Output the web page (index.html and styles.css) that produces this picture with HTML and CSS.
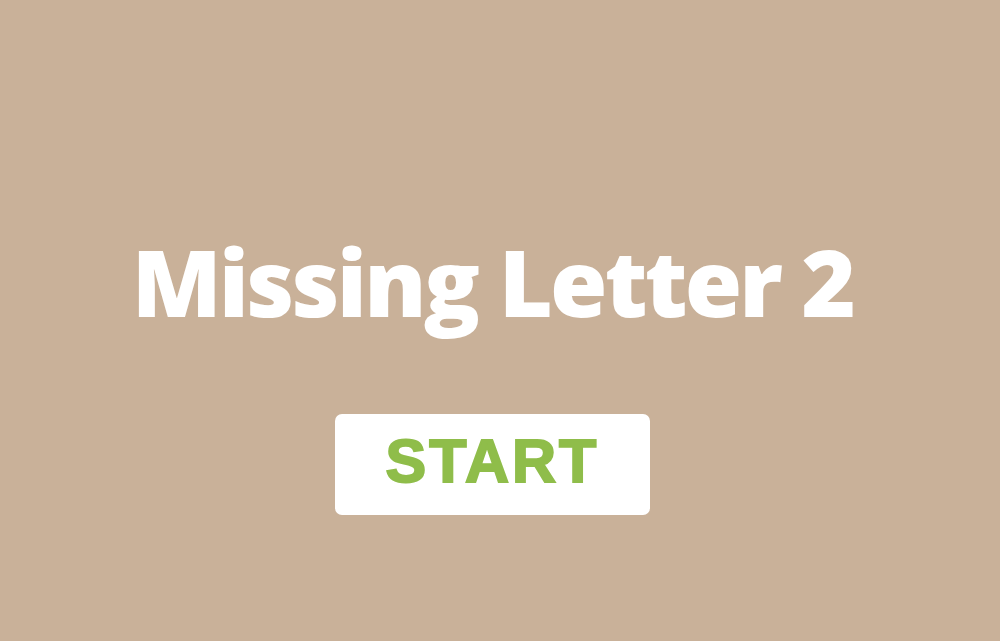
FILE: index.html
```html
<!DOCTYPE html>
<html>
<head>
<meta charset="utf-8">
<link rel="stylesheet" href="styles.css">
</head>
<body>
<main class="screen">
  <h1 class="title">Missing Letter 2</h1>
  <button class="start">START</button>
</main>
</body>
</html>
```
FILE: styles.css
```css
html, body {
  margin: 0;
  padding: 0;
  height: 100%;
  background: #c9b199;
}
.screen {
  height: 641px;
  box-sizing: border-box;
  display: flex;
  flex-direction: column;
  align-items: center;
  padding-top: 226px;
  padding-right: 15px;
}
.title {
  margin: 0;
  font-family: "Open Sans", "Lato", sans-serif;
  font-weight: 800;
  font-size: 93px;
  line-height: 110px;
  letter-spacing: -2.8px;
  color: #ffffff;
}
.start {
  margin-top: 78px;
  width: 315px;
  height: 101px;
  border: none;
  border-radius: 7px;
  background: #ffffff;
  color: #8fbd4a;
  font-family: "Liberation Sans", Arial, sans-serif;
  font-weight: bold;
  font-size: 61px;
  line-height: 89px;
  letter-spacing: 3px;
  -webkit-text-stroke: 2px #8fbd4a;
  padding: 0 0 6px 0;
}
```
